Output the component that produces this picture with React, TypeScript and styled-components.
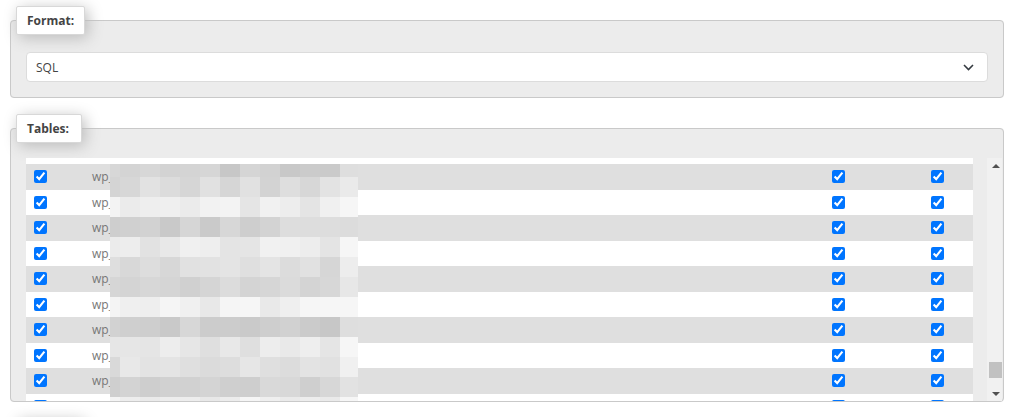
import React from "react";
import styled, { createGlobalStyle } from "styled-components";

const GlobalStyle = createGlobalStyle`
  html, body {
    margin: 0;
    background: #fff;
    overflow: hidden;
  }
  body {
    font-family: "Open Sans", "Liberation Sans", Arial, sans-serif;
    font-size: 12px;
    color: #444;
  }
`;

const ROW_HEIGHT = 25.5;
const SCROLL_OFFSET = 19.5;
const ROW_COUNT = 11;

// how far the (redacted) table name runs, in mosaic tiles, per row
const nameLengths = [12, 12, 12, 9, 12, 12, 10, 12, 12, 12, 12];

const Page = styled.div`
  padding: 6px 20px 0 10px;
`;

const Fieldset = styled.fieldset<{ $gap?: number }>`
  margin: ${(p) => p.$gap ?? 0}px 0 0;
  padding: 0;
  min-width: 0;
  border: 1px solid #c9c9c9;
  border-radius: 4px;
  background: #ececec;
`;

const Legend = styled.legend`
  margin-left: 5px;
  min-width: 44px;
  min-height: 17px;
  padding: 5px 10px;
  background: #fff;
  border: 1px solid #d8d8d8;
  border-radius: 2px;
  box-shadow: 3px 3px 15px #bbb;
  font-weight: bold;
  font-size: 12px;
  line-height: 17px;
  color: #444;
`;

const FieldBody = styled.div<{ $pad: string }>`
  padding: ${(p) => p.$pad};
`;

const SelectWrap = styled.div`
  position: relative;
`;

const Select = styled.select`
  display: block;
  width: 100%;
  height: 30px;
  padding: 0 30px 0 9px;
  appearance: none;
  background: #fff;
  border: 1px solid #dcdcdc;
  border-radius: 4px;
  font-family: inherit;
  font-size: 12px;
  color: #444;
  outline: none;
`;

const Chevron = styled.svg`
  position: absolute;
  right: 14px;
  top: 12px;
  pointer-events: none;
`;

const ScrollArea = styled.div`
  display: flex;
  height: 243px;
`;

const TableView = styled.div`
  position: relative;
  flex: 1;
  overflow: hidden;
  padding-right: 14px;
`;

const Rows = styled.div`
  margin-top: -${SCROLL_OFFSET}px;
`;

const Row = styled.div<{ $striped: boolean }>`
  display: grid;
  grid-template-columns: 39px 1fr 72px 72px;
  column-gap: 27px;
  align-items: center;
  height: ${ROW_HEIGHT}px;
  background: ${(p) => (p.$striped ? "#dfdfdf" : "#fff")};
`;

const CheckCell = styled.div<{ $center?: boolean }>`
  display: flex;
  justify-content: ${(p) => (p.$center ? "center" : "flex-start")};
  padding-left: ${(p) => (p.$center ? 0 : 8)}px;
`;

const Check = styled.input`
  width: 13px;
  height: 13px;
  margin: 0;
`;

const Name = styled.span`
  color: #777;
  font-size: 12px;
`;

const Mosaic = styled.div`
  position: absolute;
  left: 84px;
  top: 6px;
  display: grid;
  grid-template-columns: 10px repeat(11, 20px) 18px;
  grid-template-rows: 13px repeat(11, 20px) 4px;
`;

const Tile = styled.div``;

const Scrollbar = styled.div`
  display: flex;
  flex-direction: column;
  width: 15px;
  background: #f1f1f1;
`;

const ArrowButton = styled.div<{ $down?: boolean }>`
  display: flex;
  align-items: center;
  justify-content: center;
  height: 15px;
  padding-left: 3px;

  &::after {
    content: "";
    border-left: 4px solid transparent;
    border-right: 4px solid transparent;
    ${(p) =>
      p.$down ? "border-top: 4px solid #505050;" : "border-bottom: 4px solid #505050;"}
  }
`;

const Track = styled.div`
  flex: 1;
`;

const Thumb = styled.div`
  margin: 189px 0 0 2px;
  width: 13px;
  height: 16px;
  background: #c1c1c1;
`;

// grey level of the row stripes over a vertical band of the table view
function stripeLevel(top: number, bottom: number) {
  let sum = 0;
  let n = 0;
  for (let y = top; y < bottom; y += 0.5) {
    const idx = Math.floor((y + SCROLL_OFFSET) / ROW_HEIGHT);
    sum += idx % 2 === 1 ? 223 : 255;
    n++;
  }
  return sum / n;
}

function noise(r: number, c: number) {
  const v = Math.sin(r * 12.9898 + c * 78.233) * 43758.5453;
  return v - Math.floor(v);
}

function mosaicTiles() {
  const cols = [10, ...Array(11).fill(20), 18];
  const rows = [13, ...Array(11).fill(20), 4];
  const tiles: { key: string; color: string }[] = [];
  let top = 6;
  rows.forEach((h, r) => {
    const rowIdx = Math.min(
      ROW_COUNT - 1,
      Math.floor((top + h / 2 + SCROLL_OFFSET) / ROW_HEIGHT)
    );
    const base = stripeLevel(top, top + h);
    cols.forEach((_, c) => {
      const inText = c < nameLengths[rowIdx];
      const dark = inText ? 8 + noise(r, c) * 16 : noise(r, c) * 3;
      const g = Math.round(Math.min(246, base - dark));
      tiles.push({ key: `${r}-${c}`, color: `rgb(${g},${g},${g})` });
    });
    top += h;
  });
  return tiles;
}

const App: React.FC = () => {
  const tiles = mosaicTiles();

  return (
    <Page>
      <GlobalStyle />

      <Fieldset>
        <Legend>Format:</Legend>
        <FieldBody $pad="17px 15px 15px 15px">
          <SelectWrap>
            <Select defaultValue="sql">
              <option value="sql">SQL</option>
              <option value="csv">CSV</option>
            </Select>
            <Chevron width="11" height="7" viewBox="0 0 11 7">
              <path d="M1 1l4.5 4.5L10 1" fill="none" stroke="#343a40" strokeWidth="1.6" />
            </Chevron>
          </SelectWrap>
        </FieldBody>
      </Fieldset>

      <Fieldset $gap={16}>
        <Legend>Tables:</Legend>
        <FieldBody $pad="15px 1px 0 15px">
          <ScrollArea>
            <TableView>
              <Rows>
                {Array.from({ length: ROW_COUNT }, (_, i) => {
                  // rows scrolled half out of view show no readable name
                  const partial = i === 0 || i === ROW_COUNT - 1;
                  return (
                    <Row key={i} $striped={i % 2 === 1}>
                      <CheckCell>
                        <Check type="checkbox" checked readOnly />
                      </CheckCell>
                      <Name>{partial ? "" : "wp_"}</Name>
                      <CheckCell $center>
                        <Check type="checkbox" checked readOnly />
                      </CheckCell>
                      <CheckCell $center>
                        <Check type="checkbox" checked readOnly />
                      </CheckCell>
                    </Row>
                  );
                })}
              </Rows>
              <Mosaic>
                {tiles.map((t) => (
                  <Tile key={t.key} style={{ background: t.color }} />
                ))}
              </Mosaic>
            </TableView>
            <Scrollbar>
              <ArrowButton />
              <Track>
                <Thumb />
              </Track>
              <ArrowButton $down />
            </Scrollbar>
          </ScrollArea>
        </FieldBody>
      </Fieldset>

      <Fieldset $gap={16}>
        <Legend />
        <FieldBody $pad="15px" />
      </Fieldset>
    </Page>
  );
};

export default App;
